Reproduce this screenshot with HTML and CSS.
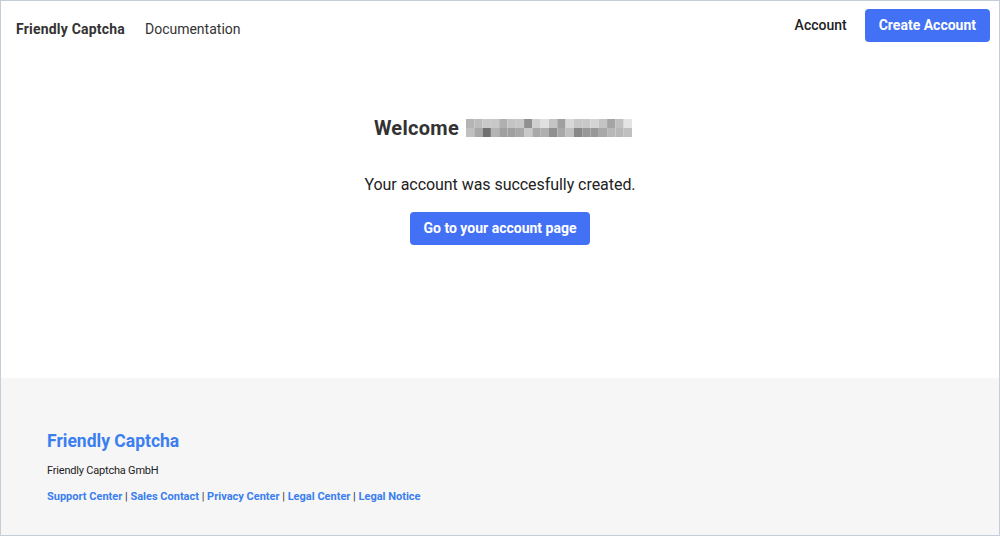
FILE: index.html
```html
<!DOCTYPE html>
<html lang="en">
<head>
	<meta charset="UTF-8">
	<title>Friendly Captcha</title>
	<link rel="stylesheet" href="styles.css">
</head>
<body>
	<div class="page">
		<div class="nav">
			<div class="nav-left">
				<a class="brand" href="#">Friendly Captcha</a>
				<a class="nav-link" href="#">Documentation</a>
			</div>
			<div class="nav-right">
				<a class="nav-account" href="#">Account</a>
				<a class="btn btn-top" href="#">Create Account</a>
			</div>
		</div>

		<div class="main">
			<h1 class="welcome">Welcome
				<svg class="blur" width="166" height="18" viewBox="0 0 20 2" preserveAspectRatio="none">
					<rect x="0" y="0" width="1" height="1" fill="#b4b4b4"/>
					<rect x="1" y="0" width="1" height="1" fill="#bcbcbc"/>
					<rect x="2" y="0" width="1" height="1" fill="#c8c8c8"/>
					<rect x="3" y="0" width="1" height="1" fill="#c8c8c8"/>
					<rect x="4" y="0" width="1" height="1" fill="#b0b0b0"/>
					<rect x="5" y="0" width="1" height="1" fill="#c4c4c4"/>
					<rect x="6" y="0" width="1" height="1" fill="#c8c8c8"/>
					<rect x="7" y="0" width="1" height="1" fill="#909090"/>
					<rect x="8" y="0" width="1" height="1" fill="#d0d0d0"/>
					<rect x="9" y="0" width="1" height="1" fill="#e0e0e0"/>
					<rect x="10" y="0" width="1" height="1" fill="#c4c4c4"/>
					<rect x="11" y="0" width="1" height="1" fill="#a0a0a0"/>
					<rect x="12" y="0" width="1" height="1" fill="#d8d8d8"/>
					<rect x="13" y="0" width="1" height="1" fill="#c8c8c8"/>
					<rect x="14" y="0" width="1" height="1" fill="#c8c8c8"/>
					<rect x="15" y="0" width="1" height="1" fill="#d4d4d4"/>
					<rect x="16" y="0" width="1" height="1" fill="#c4c4c4"/>
					<rect x="17" y="0" width="1" height="1" fill="#a4a4a4"/>
					<rect x="18" y="0" width="1" height="1" fill="#c0c0c0"/>
					<rect x="19" y="0" width="1" height="1" fill="#e4e4e4"/>
					<rect x="0" y="1" width="1" height="1" fill="#c0c0c0"/>
					<rect x="1" y="1" width="1" height="1" fill="#a8a8a8"/>
					<rect x="2" y="1" width="1" height="1" fill="#707070"/>
					<rect x="3" y="1" width="1" height="1" fill="#b4b4b4"/>
					<rect x="4" y="1" width="1" height="1" fill="#a0a0a0"/>
					<rect x="5" y="1" width="1" height="1" fill="#a0a0a0"/>
					<rect x="6" y="1" width="1" height="1" fill="#a8a8a8"/>
					<rect x="7" y="1" width="1" height="1" fill="#c8c8c8"/>
					<rect x="8" y="1" width="1" height="1" fill="#a8a8a8"/>
					<rect x="9" y="1" width="1" height="1" fill="#b0b0b0"/>
					<rect x="10" y="1" width="1" height="1" fill="#909090"/>
					<rect x="11" y="1" width="1" height="1" fill="#a8a8a8"/>
					<rect x="12" y="1" width="1" height="1" fill="#c0c0c0"/>
					<rect x="13" y="1" width="1" height="1" fill="#888888"/>
					<rect x="14" y="1" width="1" height="1" fill="#989898"/>
					<rect x="15" y="1" width="1" height="1" fill="#989898"/>
					<rect x="16" y="1" width="1" height="1" fill="#a8a8a8"/>
					<rect x="17" y="1" width="1" height="1" fill="#b8b8b8"/>
					<rect x="18" y="1" width="1" height="1" fill="#b8b8b8"/>
					<rect x="19" y="1" width="1" height="1" fill="#c0c0c0"/>
				</svg>
			</h1>
			<p class="msg">Your account was succesfully created.</p>
			<a class="btn btn-main" href="#">Go to your account page</a>
		</div>

		<div class="footer">
			<div class="footer-brand">Friendly Captcha</div>
			<div class="footer-company">Friendly Captcha GmbH</div>
			<div class="footer-links">
				<a href="#">Support Center</a> |
				<a href="#">Sales Contact</a> |
				<a href="#">Privacy Center</a> |
				<a href="#">Legal Center</a> |
				<a href="#">Legal Notice</a>
			</div>
		</div>
	</div>
</body>
</html>
```

FILE: styles.css
```css
*{
	margin: 0;
	padding: 0;
	box-sizing: border-box;
}
html, body{
	height: 100%;
}
body{
	font-family: Roboto, "Liberation Sans", Arial, sans-serif;
	color: #333;
	background: #fff;
}
a{
	text-decoration: none;
}
.page{
	height: 536px;
	border: 1px solid #c5cdd8;
	display: flex;
	flex-direction: column;
}
.nav{
	height: 51px;
	display: flex;
	justify-content: space-between;
	padding: 0 9px 0 15px;
}
.nav-left{
	display: flex;
	align-items: center;
	gap: 20px;
	padding-top: 4px;
}
.brand{
	font-size: 14px;
	font-weight: 700;
	letter-spacing: 0.2px;
	color: #333;
}
.nav-link{
	font-size: 14px;
	color: #333;
}
.nav-right{
	display: flex;
	align-items: center;
	gap: 18px;
	padding-bottom: 3px;
}
.nav-account{
	font-size: 14px;
	font-weight: 500;
	color: #222;
}
.btn{
	display: inline-block;
	background: #4271f6;
	color: #fff;
	font-size: 14px;
	font-weight: 700;
	border-radius: 4px;
}
.btn-top{
	height: 33px;
	line-height: 33px;
	padding: 0 14px;
}
.main{
	flex: 1;
	display: flex;
	flex-direction: column;
	align-items: center;
	padding-top: 64px;
}
.welcome{
	font-size: 20px;
	font-weight: 700;
	letter-spacing: 0.3px;
	color: #333;
	display: flex;
	align-items: center;
	gap: 7px;
	height: 24px;
	margin-left: 6px;
}
.blur{
	display: block;
}
.msg{
	font-size: 16px;
	color: #222;
	margin-top: 35px;
	line-height: 20px;
	letter-spacing: -0.05px;
}
.btn-main{
	margin-top: 17px;
	height: 33px;
	line-height: 33px;
	padding: 0 14px;
}
.footer{
	height: 157px;
	background: #f6f6f6;
	padding: 52px 46px 0;
}
.footer-brand{
	font-size: 17.5px;
	font-weight: 700;
	color: #3a7ef0;
	line-height: 22px;
}
.footer-company{
	font-size: 11px;
	color: #222;
	margin-top: 12px;
	line-height: 14px;
	letter-spacing: -0.2px;
}
.footer-links{
	font-size: 11px;
	color: #333;
	margin-top: 12px;
	line-height: 14px;
}
.footer-links a{
	color: #3a7ef0;
	font-weight: 700;
}
```
